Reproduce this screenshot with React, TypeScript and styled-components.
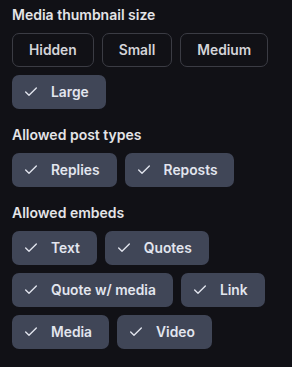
import React, { useState } from "react";
import styled, { createGlobalStyle } from "styled-components";

const Global = createGlobalStyle`
  html, body { margin: 0; padding: 0; background: #111116; }
  body { font-family: Inter, "Noto Sans", sans-serif; -webkit-font-smoothing: antialiased; }
`;

const Panel = styled.div`
  padding: 5px 12px 12px;
  display: flex;
  flex-direction: column;
  gap: 16px;
  background: #111116;
`;

const Section = styled.section`
  display: flex;
  flex-direction: column;
  gap: 8px;
`;

const Heading = styled.h3`
  margin: 0;
  font-size: 14px;
  line-height: 20px;
  font-weight: 600;
  color: #e4e4e7;
`;

const Options = styled.div`
  display: flex;
  flex-wrap: wrap;
  gap: 8px;
`;

const Chip = styled.button<{ $on: boolean }>`
  box-sizing: border-box;
  height: 34px;
  display: inline-flex;
  align-items: center;
  gap: 12px;
  padding: ${(p) => (p.$on ? "0 16px 0 10px" : "0 16px")};
  border-radius: 7px;
  border: 1px solid ${(p) => (p.$on ? "transparent" : "#3b3c44")};
  background: ${(p) => (p.$on ? "#404657" : "transparent")};
  color: ${(p) => (p.$on ? "#e2e5ee" : "#d4d4d8")};
  font-family: inherit;
  font-size: 13.8px;
  font-weight: 600;
  cursor: pointer;
`;

const CheckIcon = () => (
  <svg width="16" height="16" viewBox="0 0 24 24" fill="none" stroke="currentColor" strokeWidth="2" strokeLinecap="round" strokeLinejoin="round">
    <path d="M20 6 9 17l-5-5" />
  </svg>
);

type Group = { title: string; options: string[]; multi: boolean; initial: string[] };

const groups: Group[] = [
  { title: "Media thumbnail size", options: ["Hidden", "Small", "Medium", "Large"], multi: false, initial: ["Large"] },
  { title: "Allowed post types", options: ["Replies", "Reposts"], multi: true, initial: ["Replies", "Reposts"] },
  {
    title: "Allowed embeds",
    options: ["Text", "Quotes", "Quote w/ media", "Link", "Media", "Video"],
    multi: true,
    initial: ["Text", "Quotes", "Quote w/ media", "Link", "Media", "Video"],
  },
];

const OptionGroup = ({ g }: { g: Group }) => {
  const [sel, setSel] = useState<string[]>(g.initial);
  const toggle = (o: string) => {
    if (!g.multi) setSel([o]);
    else setSel(sel.includes(o) ? sel.filter((x) => x !== o) : [...sel, o]);
  };
  return (
    <Section>
      <Heading>{g.title}</Heading>
      <Options>
        {g.options.map((o) => {
          const on = sel.includes(o);
          return (
            <Chip key={o} $on={on} onClick={() => toggle(o)}>
              {on && <CheckIcon />}
              {o}
            </Chip>
          );
        })}
      </Options>
    </Section>
  );
};

export default function App() {
  return (
    <>
      <Global />
      <Panel>
        {groups.map((g) => (
          <OptionGroup key={g.title} g={g} />
        ))}
      </Panel>
    </>
  );
}
